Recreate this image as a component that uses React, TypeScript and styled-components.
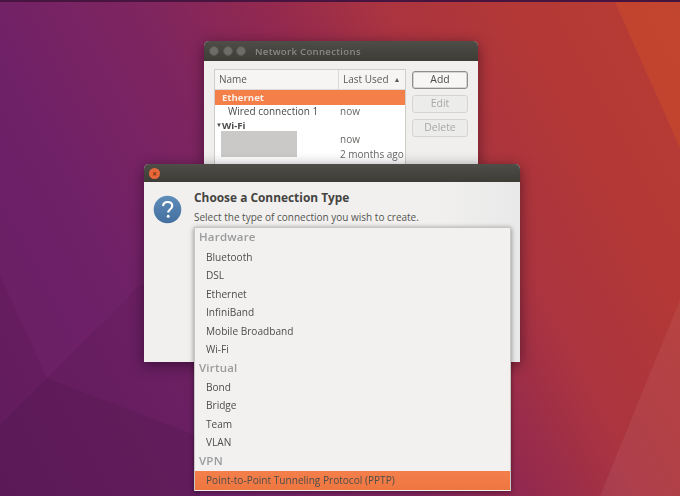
import React from "react";
import styled, { createGlobalStyle } from "styled-components";

const Global = createGlobalStyle`
  html, body { margin: 0; padding: 0; width: 680px; height: 496px; overflow: hidden; }
  body { font-family: "Open Sans", "Noto Sans", sans-serif; }
`;

const Desktop = styled.div`
  position: relative;
  width: 680px;
  height: 496px;
  overflow: hidden;
  background:
    linear-gradient(#46143f 0 2px, transparent 2px),
    linear-gradient(62deg, #671d62 0%, #6f2168 24%, #7f255f 43%, #93294f 56%, #aa3440 68%, #b33836 82%, #b93c34 100%);
`;

const Wedge = styled.svg`
  position: absolute;
  inset: 0;
`;

const Windows = styled.div`
  position: absolute;
  inset: 0;
  filter: blur(0.35px);
`;

const Win = styled.div<{ $x: number; $y: number; $w: number; $h: number }>`
  position: absolute;
  left: ${p => p.$x}px;
  top: ${p => p.$y}px;
  width: ${p => p.$w}px;
  height: ${p => p.$h}px;
  background: #f0efee;
  border-radius: 5px 5px 0 0;
  box-shadow: 0 3px 14px rgba(20, 0, 20, 0.5);
  display: flex;
  flex-direction: column;
`;

const TitleBar = styled.div<{ $h: number }>`
  height: ${p => p.$h}px;
  flex: none;
  display: flex;
  align-items: center;
  padding-left: 5px;
  gap: 3.5px;
  border-radius: 5px 5px 0 0;
  background: linear-gradient(#4f4d48, #3e3c37);
`;

const Dot = styled.span`
  width: 10px;
  height: 10px;
  border-radius: 50%;
  background: #6e6c66;
  border: 1px solid #585651;
  box-sizing: border-box;
`;

const CloseDot = styled.span`
  width: 11px;
  height: 11px;
  border-radius: 50%;
  background: #e9683a;
  color: #7a3015;
  font-size: 8px;
  font-weight: 700;
  line-height: 11px;
  text-align: center;
`;

const WinTitle = styled.span`
  margin-left: 5.5px;
  font-size: 9.6px;
  font-weight: 600;
  color: #8b8983;
  letter-spacing: 0.3px;
`;

const NetBody = styled.div`
  flex: 1;
  display: flex;
  gap: 6px;
  padding: 8px 0 0 10px;
  min-height: 0;
`;

const Tree = styled.div`
  width: 192px;
  height: 96px;
  background: #fff;
  border: 1px solid #cfcdca;
  border-bottom: none;
  box-sizing: border-box;
  font-size: 10px;
  color: #4a4a48;
`;

const TreeHead = styled.div`
  display: grid;
  grid-template-columns: 123px 1fr;
  height: 19px;
  align-items: center;
  border-bottom: 1px solid #dcdad8;
  background: #f6f5f4;
  color: #5a5a58;
`;

const HeadCell = styled.span<{ $sep?: boolean }>`
  padding-left: 4px;
  line-height: 19px;
  border-left: ${p => (p.$sep ? "1px solid #dcdad8" : "none")};
  white-space: nowrap;
`;

const Sort = styled.span`
  font-size: 7px;
  margin-left: 5px;
  vertical-align: 1px;
`;

const Row = styled.div<{ $selected?: boolean }>`
  display: grid;
  grid-template-columns: 123px 1fr;
  height: ${p => (p.$selected ? 15 : 14.2)}px;
  line-height: ${p => (p.$selected ? 15 : 13.5)}px;
  background: ${p => (p.$selected ? "#f47f48" : "transparent")};
  color: ${p => (p.$selected ? "#fbeee6" : "inherit")};
  white-space: nowrap;
`;

const GroupName = styled.span`
  font-weight: 700;
  font-size: 9.6px;
  padding-left: 7px;
  position: relative;
`;

const ConnName = styled.span`
  padding-left: 13px;
`;

const When = styled.span`
  padding-left: 2px;
  color: #666664;
`;

const Arrow = styled.span`
  position: absolute;
  left: 1px;
  top: 0;
  font-size: 6px;
`;

const Redacted = styled.div`
  position: absolute;
  left: 17px;
  top: 90px;
  width: 76px;
  height: 26px;
  background: #cbc9c8;
`;

const Buttons = styled.div`
  display: flex;
  flex-direction: column;
  gap: 6px;
  margin-top: 2px;
`;

const Btn = styled.div<{ $primary?: boolean }>`
  width: 56px;
  height: 18px;
  box-sizing: border-box;
  border-radius: 3px;
  border: 1px solid ${p => (p.$primary ? "#8f8e8c" : "#d6d4d2")};
  background: ${p => (p.$primary ? "#f7f6f5" : "#ececeb")};
  box-shadow: ${p => (p.$primary ? "inset 0 0 0 1px #d8d6d4" : "none")};
  color: ${p => (p.$primary ? "#4c4c4a" : "#a9a8a6")};
  font-size: 10.4px;
  line-height: 14.5px;
  text-align: center;
`;

const DialogBody = styled.div`
  flex: 1;
  display: flex;
  padding: 7px 0 0 9px;
  gap: 12px;
  background: linear-gradient(90deg, #f1f0ef 0, #f1f0ef 78%, #e9e9e9 100%);
`;

const Question = styled.svg`
  flex: none;
  margin-top: 6px;
`;

const Heading = styled.div`
  font-size: 11.9px;
  font-weight: 700;
  color: #45443f;
  line-height: 16px;
`;

const Sub = styled.div`
  font-size: 10px;
  color: #55544f;
  line-height: 14px;
  margin-top: 5px;
  white-space: nowrap;
`;

const List = styled.div`
  position: absolute;
  left: 194px;
  top: 227px;
  width: 317px;
  height: 264px;
  box-sizing: border-box;
  background: #f2f1f0;
  border: 1px solid #c9c7c4;
  border-bottom: none;
  box-shadow: 0 1px 5px rgba(0, 0, 0, 0.45);
`;

const Section = styled.div<{ $h: number; $lh?: number }>`
  height: ${p => p.$h}px;
  line-height: ${p => p.$lh ?? p.$h}px;
  padding-left: 4px;
  font-size: 11.5px;
  font-weight: 600;
  color: #9a9b9c;
  letter-spacing: 0.2px;
`;

const Item = styled.div<{ $active?: boolean }>`
  height: ${p => (p.$active ? 19 : 18.4)}px;
  line-height: ${p => (p.$active ? 19 : 18.4)}px;
  padding-left: 11px;
  font-size: 10.1px;
  color: #4e4d4a;
  background: ${p => (p.$active ? "linear-gradient(#f47f4c, #ee7640)" : "transparent")};
  white-space: nowrap;
`;

export default function App() {
  return (
    <Desktop>
      <Global />
      <Wedge width="680" height="496" viewBox="0 0 680 496">
        <polygon points="615,2 680,2 680,148" fill="#c6482d" opacity="0.7" />
        <polygon points="600,496 680,300 680,496" fill="#ffffff" opacity="0.06" />
        <polygon points="0,275 47,378 0,425" fill="#000" opacity="0.05" />
        <polygon points="47,378 140,285 200,285 200,437" fill="#000" opacity="0.05" />
        <polygon points="0,425 47,378 200,437 200,496 0,496" fill="#000" opacity="0.11" />
      </Wedge>

      <Windows>
        <Win $x={204} $y={41} $w={274} $h={124}>
          <TitleBar $h={20}>
            <Dot />
            <Dot />
            <Dot />
            <WinTitle>Network Connections</WinTitle>
          </TitleBar>
          <NetBody>
            <Tree>
              <TreeHead>
                <HeadCell>Name</HeadCell>
                <HeadCell $sep>
                  Last Used<Sort>▲</Sort>
                </HeadCell>
              </TreeHead>
              <Row $selected>
                <GroupName>Ethernet</GroupName>
              </Row>
              <Row>
                <ConnName>Wired connection 1</ConnName>
                <When>now</When>
              </Row>
              <Row>
                <GroupName>
                  <Arrow>▼</Arrow>Wi-Fi
                </GroupName>
              </Row>
              <Row>
                <span />
                <When>now</When>
              </Row>
              <Row>
                <span />
                <When>2 months ago</When>
              </Row>
            </Tree>
            <Buttons>
              <Btn $primary>Add</Btn>
              <Btn>Edit</Btn>
              <Btn>Delete</Btn>
            </Buttons>
          </NetBody>
          <Redacted />
        </Win>

        <Win $x={144} $y={164} $w={376} $h={198}>
          <TitleBar $h={18}>
            <CloseDot>×</CloseDot>
          </TitleBar>
          <DialogBody>
            <Question width="29" height="29" viewBox="0 0 29 29">
              <defs>
                <linearGradient id="q" x1="0" y1="0" x2="0" y2="1">
                  <stop offset="0" stopColor="#5f8db9" />
                  <stop offset="1" stopColor="#426f9f" />
                </linearGradient>
              </defs>
              <circle cx="14.5" cy="14.5" r="13.8" fill="url(#q)" />
              <path
                d="M10 11c.3-2.6 2.2-4 4.6-4 2.7 0 4.6 1.5 4.6 3.9 0 3.3-3.9 3.4-3.9 6.6"
                fill="none"
                stroke="#fff"
                strokeWidth="2.2"
              />
              <circle cx="15.2" cy="21.3" r="1.5" fill="#fff" />
            </Question>
            <div>
              <Heading>Choose a Connection Type</Heading>
              <Sub>Select the type of connection you wish to create.</Sub>
            </div>
          </DialogBody>
        </Win>

        <List>
          <Section $h={20} $lh={18}>Hardware</Section>
          <Item>Bluetooth</Item>
          <Item>DSL</Item>
          <Item>Ethernet</Item>
          <Item>InfiniBand</Item>
          <Item>Mobile Broadband</Item>
          <Item>Wi-Fi</Item>
          <Section $h={19.4}>Virtual</Section>
          <Item>Bond</Item>
          <Item>Bridge</Item>
          <Item>Team</Item>
          <Item>VLAN</Item>
          <Section $h={20}>VPN</Section>
          <Item $active>Point-to-Point Tunneling Protocol (PPTP)</Item>
        </List>
      </Windows>
    </Desktop>
  );
}
